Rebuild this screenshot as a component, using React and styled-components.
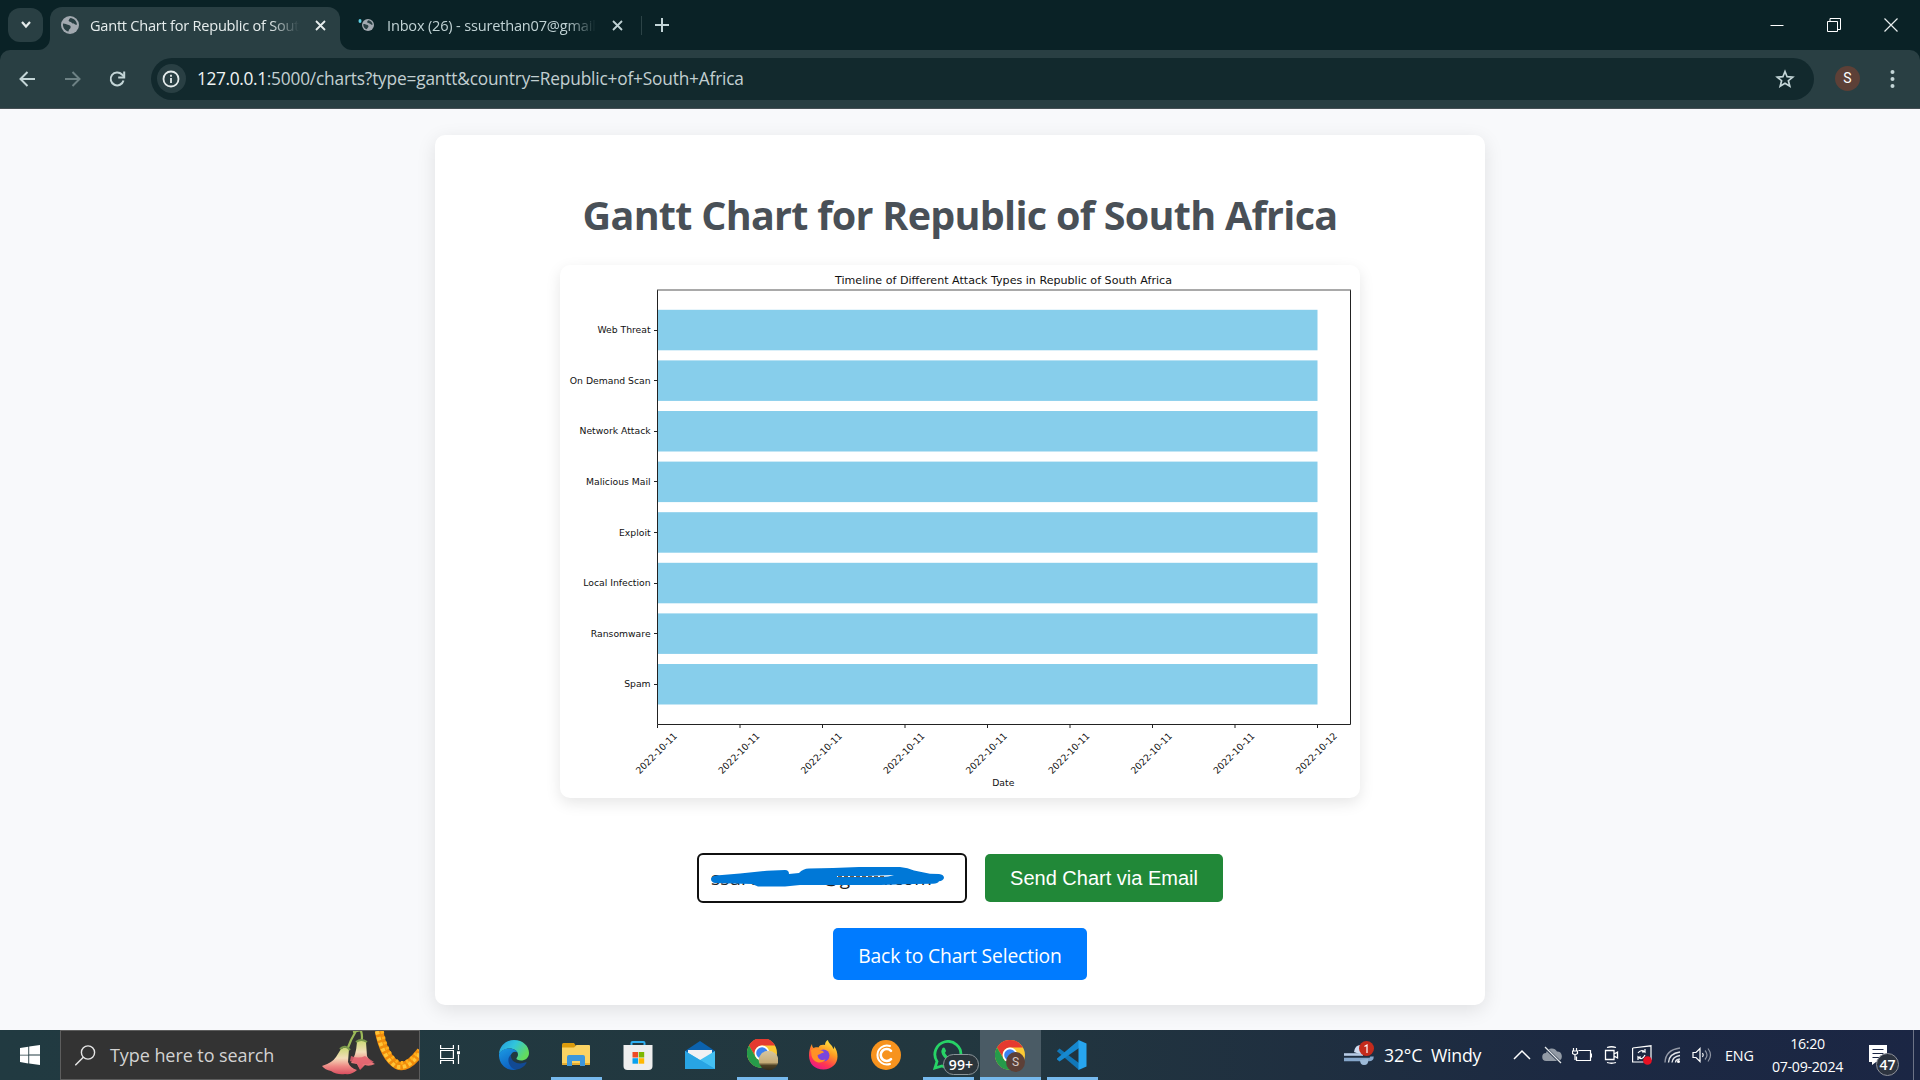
import React from "react";
import styled, { createGlobalStyle } from "styled-components";

const UI = '"Open Sans", "Noto Sans", sans-serif';

const GlobalStyle = createGlobalStyle`
  * { box-sizing: border-box; }
  html, body { margin: 0; padding: 0; }
  body { width: 1920px; height: 1080px; overflow: hidden; background: #f8f9fb; font-family: ${UI}; }
  svg { display: block; flex: none; }
`;

const Screen = styled.div`
  width: 1920px;
  height: 1080px;
  display: flex;
  flex-direction: column;
`;

/* ---------- browser chrome ---------- */

const TabStrip = styled.header`
  height: 50px;
  flex: none;
  display: flex;
  align-items: flex-start;
  background: #0a2226;
  color: #c3d5d7;
`;

const TabSearch = styled.button`
  width: 35px;
  height: 34px;
  margin: 8px 7px 0 8px;
  padding: 0;
  border: 0;
  border-radius: 12px;
  background: #293f43;
  display: flex;
  align-items: center;
  justify-content: center;
`;

const Tab = styled.div`
  position: relative;
  display: flex;
  align-items: center;
  width: ${(p) => p.$width}px;
  height: 43px;
  margin-top: 7px;
  padding: 0 ${(p) => p.$right}px 7px ${(p) => p.$left}px;
  border-radius: 12px 12px 0 0;
  background: ${(p) => (p.$active ? "#293f43" : "transparent")};
  color: ${(p) => (p.$active ? "#e6eded" : "#c0d2d4")};
`;

const TabFoot = styled.svg`
  position: absolute;
  bottom: 0;
  ${(p) => p.$side}: -12px;
`;

const TabTitle = styled.span`
  flex: none;
  width: ${(p) => p.$width}px;
  margin: 0 auto 0 ${(p) => p.$gap}px;
  overflow: hidden;
  white-space: nowrap;
  font-size: 14.6px;
  line-height: 24px;
  letter-spacing: ${(p) => p.$spacing}px;
  mask-image: linear-gradient(to right, #000 86%, transparent 100%);
`;

const StripDivider = styled.i`
  width: 1px;
  height: 19px;
  margin: 16px 13px 0 0;
  background: #2c4346;
`;

const NewTab = styled.div`
  margin-top: 18px;
`;

const WindowControls = styled.div`
  display: flex;
  align-items: center;
  gap: 43px;
  height: 49px;
  margin: 0 22px 0 auto;
`;

const Toolbar = styled.nav`
  height: 59px;
  flex: none;
  display: flex;
  align-items: center;
  padding: 0 22px 1px 17px;
  background: #293f43;
  border-bottom: 1px solid #454f54;
  border-radius: 10px 10px 0 0;
`;

const ToolbarBack = styled.div`
  background: #0a2226;
`;

const NavButtons = styled.div`
  display: flex;
  gap: 24px;
  width: 134px;
`;

const AddressBar = styled.div`
  width: 1664px;
  height: 42px;
  border-radius: 21px;
  background: #12292d;
  display: flex;
  align-items: center;
  padding: 0 19px 0 6px;
`;

const SiteInfo = styled.span`
  width: 29px;
  height: 29px;
  border-radius: 50%;
  background: #293f43;
  display: flex;
  align-items: center;
  justify-content: center;
`;

const Url = styled.span`
  margin: 1px auto 0 11px;
  white-space: nowrap;
  color: #c2cfd1;
  font-size: 17.3px;
  line-height: 26px;
  letter-spacing: -0.18px;
  b { color: #f0f4f4; font-weight: 400; letter-spacing: -0.35px; }
`;

const Profile = styled.span`
  width: 25px;
  height: 25px;
  margin: 0 27px 0 21px;
  border-radius: 50%;
  background: #5d4037;
  color: #fff;
  font: 14px/25px Roboto, sans-serif;
  text-align: center;
`;

/* ---------- page ---------- */

const Page = styled.main`
  height: 921px;
  flex: none;
  padding-top: 26px;
  display: flex;
  justify-content: center;
  align-items: flex-start;
  background: #f8f9fb;
`;

const Container = styled.section`
  width: 1050px;
  height: 870px;
  padding-top: 50px;
  border-radius: 10px;
  background: #fff;
  box-shadow: 0 5px 19px rgba(0, 0, 0, 0.1);
  display: flex;
  flex-direction: column;
  align-items: center;
`;

const Heading = styled.h1`
  margin: 0;
  height: 60px;
  white-space: nowrap;
  color: #495057;
  font-size: 39.5px;
  font-weight: 700;
  line-height: 60px;
  letter-spacing: -0.72px;
`;

const ChartCard = styled.figure`
  width: 800px;
  height: 533px;
  margin: 20px 0 55px;
  border-radius: 10px;
  background: #fff;
  box-shadow: 0 5px 15px rgba(0, 0, 0, 0.1);
  text { font-family: "DejaVu Sans", sans-serif; font-size: 9.26px; fill: #111; }
`;

const MailForm = styled.form`
  display: flex;
  align-items: center;
  gap: 18px;
  margin-bottom: 25px;
`;

const MailField = styled.div`
  position: relative;
  width: 270px;
  height: 50px;
  padding-left: 12px;
  border: 2px solid #101010;
  border-radius: 6px;
  background: #fff;
  color: #222;
  font-size: 19px;
  line-height: 47px;
  letter-spacing: 0.1px;
  white-space: nowrap;
`;

const Redaction = styled.svg`
  position: absolute;
  left: -2px;
  top: -2px;
`;

const SendButton = styled.button`
  width: 238px;
  height: 48px;
  padding: 0;
  border: 0;
  border-radius: 5px;
  background: #218838;
  color: #fff;
  font: 20px "Liberation Sans", Arial, sans-serif;
  letter-spacing: 0;
`;

const BackLink = styled.a`
  width: 254px;
  height: 52px;
  border-radius: 5px;
  background: #007bff;
  color: #fff;
  font-size: 19.3px;
  line-height: 56px;
  letter-spacing: -0.15px;
  text-align: center;
  white-space: nowrap;
`;

/* ---------- taskbar ---------- */

const Taskbar = styled.footer`
  height: 50px;
  flex: none;
  display: flex;
  background: linear-gradient(90deg, #213a41 0%, #22373f 50%, #1f2f40 68%, #1c2942 82%, #1b2644 100%);
  color: #fff;
`;

const StartButton = styled.div`
  width: 60px;
  padding: 15px 0 0 20px;
`;

const SearchBox = styled.div`
  width: 360px;
  height: 50px;
  border: 1px solid #5d5d5d;
  background: #333;
  display: flex;
  align-items: center;
  padding-left: 14px;
  overflow: hidden;
`;

const SearchHint = styled.span`
  margin: 0 auto 0 14px;
  color: #d2d2d2;
  font-size: 18px;
  letter-spacing: -0.07px;
  white-space: nowrap;
`;

const TaskView = styled.div`
  width: 63px;
  padding: 14px 0 0 20px;
`;

const AppSlot = styled.div`
  position: relative;
  width: 62px;
  height: 50px;
  display: flex;
  align-items: center;
  justify-content: center;
  background: ${(p) => (p.$active ? "linear-gradient(90deg, transparent 1px, #4a5b65 1px)" : "none")};
  &::after {
    content: "";
    display: ${(p) => (p.$running ? "block" : "none")};
    position: absolute;
    bottom: 0;
    left: ${(p) => (p.$active ? 1 : 6)}px;
    right: ${(p) => (p.$active ? 0 : 5)}px;
    height: 3px;
    background: #76b9ed;
  }
`;

const CountBadge = styled.span`
  position: absolute;
  left: 26px;
  top: 24px;
  width: 36px;
  height: 21px;
  border: 1px solid #8b9499;
  border-radius: 11px;
  background: #2b353b;
  font-size: 14px;
  font-weight: 600;
  line-height: 19px;
  text-align: center;
  letter-spacing: 0.1px;
`;

const UserBadge = styled.span`
  position: absolute;
  left: 27px;
  top: 22px;
  width: 19px;
  height: 20px;
  border-radius: 50%;
  background: #5d4037;
  color: #d7ccc8;
  font: 12px/20px Roboto, sans-serif;
  text-align: center;
`;

const Tray = styled.div`
  display: flex;
  align-items: center;
  margin-left: auto;
  width: 576px;
`;

const Weather = styled.div`
  display: flex;
  align-items: center;
  gap: 10px;
  width: 168px;
  font-size: 17.7px;
  letter-spacing: -0.2px;
  white-space: pre;
`;

const TrayIcons = styled.div`
  display: flex;
  align-items: center;
  gap: 10px;
  width: 213px;
`;

const Language = styled.span`
  width: 41px;
  font-size: 14.3px;
  letter-spacing: -0.15px;
`;

const Clock = styled.div`
  width: 83px;
  font-size: 14.2px;
  line-height: 23px;
  letter-spacing: -0.3px;
  text-align: center;
  white-space: nowrap;
`;

const Notifications = styled.div`
  position: relative;
  height: 50px;
  width: 48px;
  padding: 15px 0 0 20px;
`;

const NoticeCount = styled.span`
  position: absolute;
  left: 27px;
  top: 23px;
  width: 23px;
  height: 23px;
  border: 1px solid #8d9099;
  border-radius: 50%;
  background: #2d3440;
  font-size: 14px;
  font-weight: 600;
  line-height: 21px;
  text-align: center;
  letter-spacing: -0.1px;
`;

const ShowDesktop = styled.i`
  width: 7px;
  height: 50px;
  margin-left: auto;
  border-left: 1px solid #6c7386;
`;

/* ---------- glyphs ---------- */

const Stroke = ({ w = 20, h = 20, color = "#c3d5d7", width = 2, children }) => (
  <svg width={w} height={h} viewBox={`0 0 ${w} ${h}`} fill="none" stroke={color} strokeWidth={width}>
    {children}
  </svg>
);

const Globe = ({ size }) => (
  <svg width={size} height={size} viewBox="0 0 18 18">
    <circle cx="9" cy="9" r="9" fill="#a2a9b0" />
    <path
      d="M2 7.5c2.500 0 3.500 1 5 1.200 2 .3 3.200 1.500 2.500 3.200-.6 1.200-1.800 1.200-2 3.600C4 15 1.500 11.500 2 7.500zM9.500 2c-1.800.8-1 2-2 2.500.2 1.600 2.400.8 3 2 .8 1.500 2 .4 3 1.600.6.8 1.800.7 2.500.3C15.600 5 13 2.500 9.500 2z"
      fill="#293f43"
    />
  </svg>
);

const CloseGlyph = ({ size = 11 }) => (
  <Stroke w={size} h={size} color="currentColor" width={1.8}>
    <path d={`M1 1 ${size - 1} ${size - 1}M${size - 1} 1 1 ${size - 1}`} />
  </Stroke>
);

const ChromeLogo = () => (
  <svg width="30" height="30" viewBox="0 0 30 30">
    <circle cx="15" cy="15" r="15" fill="#fcc934" />
    <path d="M2 7.500A15 15 0 0 1 28 7.500H15a7.500 7.500 0 0 0-6.500 11.200z" fill="#e53a30" />
    <path d="M2 7.500A15 15 0 0 0 15 30l6.500-11.200a7.500 7.500 0 0 1-13 0z" fill="#269b4a" />
    <circle cx="15" cy="15" r="7.400" fill="#fff" />
    <circle cx="15" cy="15" r="5.800" fill="#3b82f0" />
  </svg>
);

const EdgeLogo = () => (
  <svg width="30" height="30" viewBox="0 0 30 30">
    <defs>
      <linearGradient id="edgeTop" x1="0" y1="0" x2="1" y2="0.5">
        <stop offset="0" stopColor="#2397dc" />
        <stop offset=".5" stopColor="#31c5dc" />
        <stop offset="1" stopColor="#63db5d" />
      </linearGradient>
      <linearGradient id="edgeSide" x1="0" y1="0" x2=".5" y2="1">
        <stop offset="0" stopColor="#1b9be4" />
        <stop offset="1" stopColor="#0d5fc0" />
      </linearGradient>
    </defs>
    <path d="M0 14C.5 6 7 0 15 0c9 0 15 6 15 13 0 5-4 7.500-8 7.500-3 0-5-1.200-4.500-2.300.5-1 1.500-1.500 1.500-3.700 0-3.500-4-6-8.500-6C6 8.500 1.500 11 0 14z" fill="url(#edgeTop)" />
    <path d="M0 14c1.500-3.500 6-5.500 10.500-5.500 4 0 7 1.800 8.200 4-3-1.800-6.200-.2-7 3-1 5 2 10.500 8 10.500-1 2.500-3 4-5 4C6 30-.5 23 0 14z" fill="url(#edgeSide)" />
    <path d="M12 14.500c-2 1.800-3.500 5-2 9 1.500 4 5 6.500 8 6 4-.7 7.500-3 9.500-6.500.3-.7-.2-1-.8-.7-6 2.700-15.500.7-14.700-7.800z" fill="#124a94" />
  </svg>
);

const ExplorerLogo = () => (
  <svg width="28" height="24" viewBox="0 0 28 24">
    <path d="M0 1.500Q0 0 1.500 0H12l2 3-2 3H0z" fill="#dc9b0c" />
    <path d="M0 4.500h12L14.500 2H27q1 0 1 1v18q0 1-1 1H1q-1 0-1-1z" fill="#fbd363" />
    <path d="M0 20h28v1q0 1-1 1H1q-1 0-1-1z" fill="#e7ae31" />
    <path d="M5 23V14q0-2 2-2h14q2 0 2 2v9h-5v-5h-8v5z" fill="#3d97dc" />
  </svg>
);

const StoreLogo = () => (
  <svg width="30" height="30" viewBox="0 0 30 30">
    <path d="M8.500 8V3Q8.500 2 9.500 2h11q1 0 1 1v5" fill="none" stroke="#2faef0" strokeWidth="2" />
    <path d="M.5 5h29v21q0 4-4 4h-21q-4 0-4-4z" fill="#eee" />
    <path d="M9.500 12h5.500v5.500H9.500z" fill="#ee4a25" />
    <path d="M15.700 12h5.500v5.500h-5.500z" fill="#7db700" />
    <path d="M9.500 18.200h5.500v5.500H9.500z" fill="#08a1ef" />
    <path d="M15.700 18.200h5.500v5.500h-5.500z" fill="#ffb801" />
  </svg>
);

const MailLogo = () => (
  <svg width="30" height="28" viewBox="0 0 30 28">
    <path d="M0 10 15 0l15 10v6H0z" fill="#0b62ae" />
    <path d="M3 9h24v11H3z" fill="#f1f1f3" />
    <path d="M0 10 15 19 30 10v18H0z" fill="#44c0f2" />
    <path d="M0 28 15 19l15 9z" fill="#2fa6e6" />
    <path d="m0 10 30 18H0z" fill="#28a4e3" />
  </svg>
);

const FirefoxLogo = () => (
  <svg width="30" height="30" viewBox="0 0 30 30">
    <defs>
      <linearGradient id="fox" x1=".8" y1="0" x2=".3" y2="1">
        <stop offset="0" stopColor="#fff045" />
        <stop offset=".4" stopColor="#ff9a22" />
        <stop offset=".75" stopColor="#ff3750" />
        <stop offset="1" stopColor="#e8168a" />
      </linearGradient>
    </defs>
    <path d="M3 4c0 2 .5 3 1.500 4 1-.6 3-1 5-.5C10.500 5 13 4.500 16 5c0-2.500 1-4 3-5 0 3 4 4.500 5.500 9 .7-.6.8-1.500.6-3 2.500 3.500 3.400 7 3.400 10.500C28.500 24 22.500 29.500 14.500 29.500 6 29.500 0 24 0 15.500 0 11 1 7 3 4z" fill="url(#fox)" />
    <circle cx="14.500" cy="15.500" r="6" fill="#7a45dd" />
    <path d="M2 10c3-2 6-1.500 8 .5 2-.5 4 0 5 2-3 .5-4 2-6.500 2.500 0 4 4 6 8 4.500-3 5-12.500 4-14-4z" fill="#ff9226" />
  </svg>
);

const CoinLogo = () => (
  <svg width="30" height="30" viewBox="0 0 30 30" fill="none" stroke="#fff" strokeLinecap="round">
    <circle cx="15" cy="15" r="15" fill="#f7931e" stroke="none" />
    <path d="M19 6A9.500 9.500 0 1 0 19 24" strokeWidth="2" />
    <path d="M20 10.800a6 6 0 1 0 0 8.400" strokeWidth="2.600" />
  </svg>
);

const WhatsAppLogo = () => (
  <svg width="30" height="30" viewBox="0 0 30 30">
    <path d="M2 28 4 21.500A13 13 0 1 1 9 26z" fill="none" stroke="#27d366" strokeWidth="2.800" />
    <path d="M9.500 8c1-1 2-.7 2.500.5l1 2.300c.3.8-1.200 1.700-1 2.300 1.200 2.300 2.800 4 5.500 5 .8.200 1.500-1.700 2.300-1.300l2.700 1.300c.8.500 0 2.500-1.500 3.300-4.500 2-13-5-12.700-10.400z" fill="#27d366" />
  </svg>
);

const CodeLogo = () => (
  <svg width="30" height="30" viewBox="0 0 30 30">
    <path d="M0 11 2.500 8.500 22 23v7L.3 11.500z" fill="#1177b8" />
    <path d="M0 18.500 22 0v8L2.500 21.500 0 19.500z" fill="#1688cf" />
    <path d="m21.500 0 8 3.500v23l-8 3.500z" fill="#27a5ef" />
  </svg>
);

const WindowsLogo = () => (
  <svg width="20" height="20" viewBox="0 0 20 20" fill="#fff">
    <path d="m0 3 8.300-1.300v8H0zM9.200 1.500 20 0v9.600H9.200zM0 10.400h8.300v8L0 17zM9.200 10.400H20V20L9.200 18.500z" />
  </svg>
);

const Blossoms = () => (
  <svg width="98" height="48" viewBox="0 0 98 48">
    <defs>
      <linearGradient id="petal" x1="0" y1="0" x2="0" y2="1">
        <stop offset="0" stopColor="#c9d873" />
        <stop offset=".4" stopColor="#f3ddba" />
        <stop offset=".7" stopColor="#ee8a85" />
        <stop offset="1" stopColor="#d94f60" />
      </linearGradient>
    </defs>
    <path d="M35 0Q30 8 26 19M40 0q2 6 0 12M32 1l8-2" fill="none" stroke="#9bb958" strokeWidth="2.200" />
    <path d="M36 11q5-4 9 0l1 14q2 5 8 8-6 3-10 1l-5 5-3-6-6-1q5-7 6-21z" fill="url(#petal)" />
    <path d="M20 18q5-3 8 0l-1 13q2 6 9 8-5 5-12 4-8 1-14-3-6-1-9-5 10-3 14-9z" fill="url(#petal)" />
    <path d="M30 25q8 3 14 0l9 6-6 2-5 0-3 5-3-5-7-3z" fill="#e3626e" opacity=".85" />
    <path d="M19 18q5-5 10 1M35 11q5-4 11 0" fill="none" stroke="#79974b" strokeWidth="2" />
    <path d="M58 0q5 26 18 34 10 5 24-14" fill="none" stroke="#f08c0c" strokeWidth="8.500" />
    <path d="M56 0q6 26 18 35 12 5 25-13" fill="none" stroke="#ffc437" strokeWidth="4" strokeDasharray="3.500 2.500" />
    <path d="M61 0q5 24 16 31 9 4 21-12" fill="none" stroke="#ffae1a" strokeWidth="3.500" strokeDasharray="2.500 3" />
  </svg>
);

/* ---------- chart ---------- */

const attacks = [
  "Web Threat",
  "On Demand Scan",
  "Network Attack",
  "Malicious Mail",
  "Exploit",
  "Local Infection",
  "Ransomware",
  "Spam",
];
const dates = [...Array(8).fill("2022-10-11"), "2022-10-12"];
const PLOT = { left: 97.500, right: 790.500, top: 25, bottom: 459.500 };

const GanttChart = () => (
  <svg width="800" height="533" viewBox="0 0 800 533">
    <text x="443.500" y="19" textAnchor="middle" style={{ fontSize: 11.1 }}>
      Timeline of Different Attack Types in Republic of South Africa
    </text>
    {attacks.map((name, i) => {
      const y = 44.800 + i * 50.600;
      return (
        <g key={name}>
          <rect x={PLOT.left} y={y} width="660" height="40.500" fill="#87ceeb" />
          <path d={`M${PLOT.left - 3.5} ${Math.round(y + 19.7) + 0.5}h3.500`} stroke="#222" />
          <text x="90.600" y={y + 23.3} textAnchor="end">{name}</text>
        </g>
      );
    })}
    <path d={`M${PLOT.left} ${PLOT.top}V${PLOT.bottom}H${PLOT.right}V${PLOT.top}`} fill="none" stroke="#222" />
    <path d={`M${PLOT.left - 0.5} ${PLOT.top}H${PLOT.right + 0.5}`} stroke="#555" strokeWidth="1.200" />
    {dates.map((date, i) => {
      const x = PLOT.left + i * 82.500;
      return (
        <g key={i}>
          <path d={`M${x} ${PLOT.bottom}v3.500`} stroke="#222" />
          <text transform={`translate(${x + 1.2} ${PLOT.bottom + 31}) rotate(-45)`} textAnchor="middle">{date}</text>
        </g>
      );
    })}
    <text x="443.300" y="520.600" textAnchor="middle">Date</text>
  </svg>
);

const apps = [
  { icon: <EdgeLogo /> },
  { icon: <ExplorerLogo />, running: true },
  { icon: <StoreLogo /> },
  { icon: <MailLogo /> },
  {
    icon: (
      <svg width="32" height="32" viewBox="-1 1 32 32">
        <ChromeLogo />
        <defs>
          <linearGradient id="dusk" x1="0" y1="0" x2="0" y2="1">
            <stop offset="0" stopColor="#d5c6a2" />
            <stop offset=".6" stopColor="#c6ad78" />
            <stop offset=".75" stopColor="#4d4225" />
            <stop offset="1" stopColor="#302c1c" />
          </linearGradient>
        </defs>
        <circle cx="21.500" cy="22.500" r="9.800" fill="url(#dusk)" />
      </svg>
    ),
    running: true,
  },
  { icon: <FirefoxLogo /> },
  { icon: <CoinLogo /> },
  { icon: <WhatsAppLogo />, running: true, badge: <CountBadge>99+</CountBadge> },
  { icon: <ChromeLogo />, running: true, active: true, badge: <UserBadge>S</UserBadge> },
  { icon: <CodeLogo />, running: true },
];

export default function App() {
  return (
    <Screen>
      <GlobalStyle />
      <TabStrip>
        <TabSearch>
          <Stroke w={12} h={10} color="#e3eaea" width={2.2}>
            <path d="m2 2 4 4.500L10 2" />
          </Stroke>
        </TabSearch>
        <Tab $active $width={290} $left={11} $right={14}>
          <TabFoot $side="left" width="12" height="12"><path d="M12 0v12H0A12 12 0 0 0 12 0" fill="#293f43" /></TabFoot>
          <Globe size={18} />
          <TabTitle $width={209} $gap={11} $spacing={-0.25}>Gantt Chart for Republic of South Africa</TabTitle>
          <CloseGlyph />
          <TabFoot $side="right" width="12" height="12"><path d="M0 0v12h12A12 12 0 0 1 0 0" fill="#293f43" /></TabFoot>
        </Tab>
        <Tab $width={301} $left={18} $right={18}>
          <svg width="16" height="16" viewBox="0 0 16 16">
            <ellipse cx="2" cy="4" rx="1.500" ry="2" fill="#5fd0e4" />
            <g transform="translate(4 2)"><Globe size={12} /></g>
          </svg>
          <TabTitle $width={209} $gap={13} $spacing={-0.2}>Inbox (26) - ssurethan07@gmail.com</TabTitle>
          <CloseGlyph />
        </Tab>
        <StripDivider />
        <NewTab>
          <Stroke w={14} h={14}><path d="M7 0v14M0 7h14" /></Stroke>
        </NewTab>
        <WindowControls>
          <Stroke w={14} h={14} color="#fff" width={1}><path d="M.5 7.500h13" /></Stroke>
          <Stroke w={14} h={14} color="#fff" width={1}><path d="M.5 3.500h10v10H.5zM3 3V.5h10.500v11H11" /></Stroke>
          <Stroke w={14} h={14} color="#e8eeee" width={1.2}><path d="m.5.5 13 13M13.500.5l-13 13" /></Stroke>
        </WindowControls>
      </TabStrip>
      <ToolbarBack>
        <Toolbar>
          <NavButtons>
            <Stroke w={21} h={20}><path d="M18 10H4M10.500 3 3.500 10l7 7" /></Stroke>
            <Stroke w={21} h={20} color="#6d8184"><path d="M3 10h14M10.500 3l7 7-7 7" /></Stroke>
            <Stroke w={21} h={20}>
              <path d="M16.500 11.500A6.500 6.500 0 1 1 15 5.500l2 2.200" />
              <path d="M17.200 2.500v6h-6" />
            </Stroke>
          </NavButtons>
          <AddressBar>
            <SiteInfo>
              <Stroke w={18} h={18} color="#e4ebeb" width={1.8}>
                <circle cx="9" cy="9" r="7.500" />
                <path d="M9 8v5M9 4.800v2" />
              </Stroke>
            </SiteInfo>
            <Url><b>127.0.0.1</b>:5000/charts?type=gantt&amp;country=Republic+of+South+Africa</Url>
            <Stroke w={20} h={20} color="#c3d5d7" width={1.7}>
              <path d="m10 2.500 2.100 5.200 5.600.4-4.300 3.600 1.400 5.500L10 14.200l-4.800 3 1.400-5.500-4.300-3.600 5.600-.4z" />
            </Stroke>
          </AddressBar>
          <Profile>S</Profile>
          <svg width="11" height="20" viewBox="0 0 11 20" fill="#c3d5d7">
            <circle cx="5.500" cy="3" r="2" />
            <circle cx="5.500" cy="10" r="2" />
            <circle cx="5.500" cy="17" r="2" />
          </svg>
        </Toolbar>
      </ToolbarBack>

      <Page>
        <Container>
          <Heading>Gantt Chart for Republic of South Africa</Heading>
          <ChartCard><GanttChart /></ChartCard>
          <MailForm>
            <MailField>
              ssurethan07@gmail.com
              <Redaction width="270" height="50" viewBox="0 0 270 50">
                <path
                  d="M18 30Q14 29 14 26 14 23 19 22.500L43 20.500 70 17.800 88 17Q92 17 92 21L102 20Q106 15.500 112 15.500L136 15 162 14H203Q211 14.500 217 17.500L233 20.800 242 21Q247 21.500 247 25 246 28 242 28.200 241 30.500 236 30.800L215 31 183 32H103L88 33.500H61L55 31z"
                  fill="#0078d7"
                />
                <path d="M140 23h30l27-1q-5 1.800-14 2h-43z" fill="#fff" />
                <path d="M141 23.600h46" stroke="#5a4a3c" strokeWidth="1" strokeDasharray="4 2" />
              </Redaction>
            </MailField>
            <SendButton type="button">Send Chart via Email</SendButton>
          </MailForm>
          <BackLink>Back to Chart Selection</BackLink>
        </Container>
      </Page>

      <Taskbar>
        <StartButton><WindowsLogo /></StartButton>
        <SearchBox>
          <Stroke w={21} h={21} color="#e6e6e6" width={1.4}>
            <circle cx="13" cy="7.500" r="6.600" />
            <path d="M8.300 12.300.3 20.300" />
          </Stroke>
          <SearchHint>Type here to search</SearchHint>
          <Blossoms />
        </SearchBox>
        <TaskView>
          <Stroke w={21} h={21} color="#fff" width={1.2}>
            <path d="M.6 1v3.500h12.800V1M.6 20v-3.500h12.800V20M.6 6.500h12.800v8H.6zM18.500 1v5M18.500 10.500V20" />
            <path d="M17 7.200h3v3h-3z" fill="#fff" stroke="none" />
          </Stroke>
        </TaskView>
        {apps.map((app, i) => (
          <AppSlot key={i} $running={app.running} $active={app.active}>
            {app.icon}
            {app.badge}
          </AppSlot>
        ))}
        <Tray>
          <Weather>
            <svg width="30" height="30" viewBox="0 0 30 30">
              <path d="M10 12q1-8 8-7 6 2 5 7-1 3-5 3z" fill="#cfdcf0" />
              <path d="M0 14.500h19" fill="none" stroke="#b7cbe5" strokeWidth="2.600" />
              <path d="M0 19.500h25q3 0 3-3" fill="none" stroke="#86a7cb" strokeWidth="3.500" />
              <path d="M16 20q0 5 4 5 5 0 4-6" fill="#9dbad8" />
              <circle cx="22.500" cy="8.500" r="7.500" fill="#c42b1c" />
              <path d="M20.500 6.500 23 5v8" fill="none" stroke="#fff" strokeWidth="1.200" />
            </svg>
            {"32°C  Windy"}
          </Weather>
          <TrayIcons>
            <Stroke w={20} h={20} color="#fff" width={1.5}><path d="m2 14 8-8 8 8" /></Stroke>
            <svg width="20" height="20" viewBox="0 0 20 20">
              <path d="M4.500 16a4 4 0 0 1-.5-8A6 6 0 0 1 15 6.500a4.800 4.800 0 0 1 1 9.500z" fill="#929aa5" />
              <path d="m2.500 2 16.500 16" stroke="#1d2c41" strokeWidth="2.600" />
              <path d="m3 2 16 16" stroke="#e6e9ed" strokeWidth="1.200" />
            </svg>
            <Stroke w={20} h={20} color="#fff" width={1.2}>
              <path d="M6.500 5.500h12v10H4.500v-4M19.500 8.500v4M1.500 3v3M4.500 3v3M.5 6h5v2.500q-2.500 2-5 0zM3 9v6" />
            </Stroke>
            <Stroke w={20} h={20} color="#fff" width={1.3}>
              <path d="M3.500 5.500h8.500v9H3.500zM12 9l3.500-2v6L12 11M5 2.500q4.500-1.500 9 0M5 17.500q4.500 1.500 9 0" />
            </Stroke>
            <svg width="20" height="20" viewBox="0 0 20 20" fill="none" stroke="#fff" strokeWidth="1.200">
              <path d="M.6 3 19 .8V15M.6 3v14h11M6 8q3-4 7-1V4M13 7h-3M13 10q-3 6-7 2v3M6 12h3" />
              <circle cx="15.500" cy="15.500" r="4.300" fill="#e81123" stroke="none" />
            </svg>
            <Stroke w={20} h={20} color="#e2e5ea" width={1.4}>
              <path d="M3 17.500Q3.500 5 18 3" opacity=".6" />
              <path d="M6.500 17.500Q7 8.500 18 7M10 17.500q.5-6 8-7M13.500 17.500q0-3 4.500-3.500" />
              <circle cx="16.500" cy="16.500" r="1.500" fill="#fff" stroke="none" />
            </Stroke>
            <Stroke w={20} h={20} color="#fff" width={1.2}>
              <path d="M1 7.500h3l4-4v13l-4-4H1zM10.500 8q1.500 2 0 4" />
              <path d="M13 5.500q4 4.500 0 9M16 3.500q5 6.500 0 13" opacity=".5" />
            </Stroke>
          </TrayIcons>
          <Language>ENG</Language>
          <Clock>16:20<br />07-09-2024</Clock>
          <Notifications>
            <svg width="18" height="20" viewBox="0 0 18 20">
              <path d="M0 0h18v17H7l-4 3v-3H0z" fill="#fff" />
              <path d="M3.500 4.500h11M3.500 8.500h11M3.500 12.500h7" stroke="#1b2644" strokeWidth="1.200" />
            </svg>
            <NoticeCount>47</NoticeCount>
          </Notifications>
          <ShowDesktop />
        </Tray>
      </Taskbar>
    </Screen>
  );
}
